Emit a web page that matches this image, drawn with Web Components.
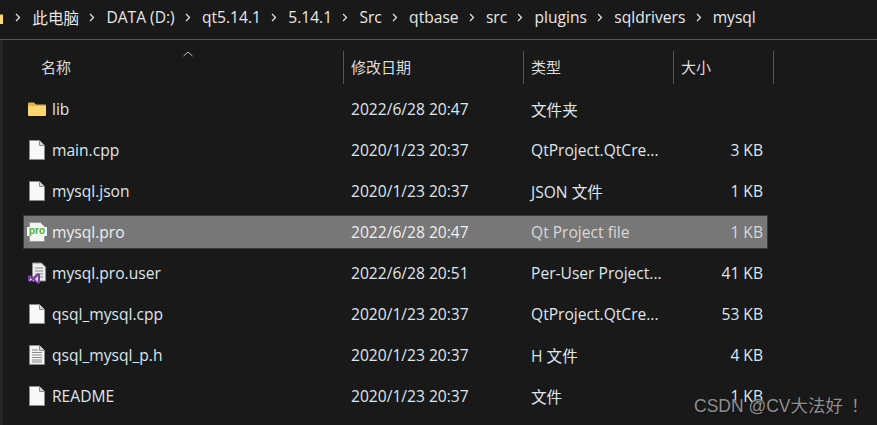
<!DOCTYPE html>
<html lang="zh">
<head>
<meta charset="utf-8">
<title>mysql</title>
<style>
  html, body { margin: 0; height: 100%; }
  body {
    background: #191919;
    color: #e6e6e6;
    font: 15.6px "Open Sans", "Noto Sans CJK SC", sans-serif;
    overflow: hidden;
  }
  explorer-window { height: 425px; }
  water-mark span { margin-left: 8px; }
</style>
</head>
<body>
<explorer-window>
  <path-bar>
    <path-crumb>此电脑</path-crumb>
    <path-crumb>DATA (D:)</path-crumb>
    <path-crumb>qt5.14.1</path-crumb>
    <path-crumb>5.14.1</path-crumb>
    <path-crumb>Src</path-crumb>
    <path-crumb>qtbase</path-crumb>
    <path-crumb>src</path-crumb>
    <path-crumb>plugins</path-crumb>
    <path-crumb>sqldrivers</path-crumb>
    <path-crumb>mysql</path-crumb>
  </path-bar>
  <list-head></list-head>
  <file-row icon="folder" name="lib" date="2022/6/28 20:47" kind="文件夹"></file-row>
  <file-row icon="file" name="main.cpp" date="2020/1/23 20:37" kind="QtProject.QtCre..." size="3 KB"></file-row>
  <file-row icon="file" name="mysql.json" date="2020/1/23 20:37" kind="JSON 文件" size="1 KB"></file-row>
  <file-row icon="pro" name="mysql.pro" date="2022/6/28 20:47" kind="Qt Project file" size="1 KB" selected></file-row>
  <file-row icon="vs" name="mysql.pro.user" date="2022/6/28 20:51" kind="Per-User Project..." size="41 KB"></file-row>
  <file-row icon="file" name="qsql_mysql.cpp" date="2020/1/23 20:37" kind="QtProject.QtCre..." size="53 KB"></file-row>
  <file-row icon="text" name="qsql_mysql_p.h" date="2020/1/23 20:37" kind="H 文件" size="4 KB"></file-row>
  <file-row icon="file" name="README" date="2020/1/23 20:37" kind="文件" size="1 KB"></file-row>
  <water-mark>CSDN @CV大法好<span>！</span></water-mark>
</explorer-window>

<script>
const sheet = `
  p { margin: 0; }
  svg { display: block; }
`;

class ExplorerWindow extends HTMLElement {
  constructor() {
    super();
    this.attachShadow({ mode: "open" });
    this.shadowRoot.innerHTML = `
      <style>
        :host { display: flex; flex-direction: column; position: relative; overflow: hidden; }
        .rows { display: flex; flex-direction: column; border-left: 3px solid #262626; flex: 1; }
      </style>
      <slot name="top"></slot>
      <div class="rows"><slot></slot></div>`;
  }
  connectedCallback() {
    this.querySelector("path-bar").slot = "top";
  }
}

class PathBar extends HTMLElement {
  constructor() {
    super();
    this.attachShadow({ mode: "open" });
    this.shadowRoot.innerHTML = `
      <style>
        :host {
          display: flex; align-items: center; height: 40px; box-sizing: border-box;
          border-bottom: 1px solid #555; padding-bottom: 5px; overflow: hidden;
        }
        svg { display: block; flex: none; margin-left: -9px; }
      </style>
      <svg width="14" height="16" viewBox="0 0 14 16">
        <path d="M0 4h3l2 1.500h7V15H0z" fill="#f4c84f"/>
        <path d="M0 6.500h12V15H0z" fill="#fddc75"/>
      </svg>
      <slot></slot>`;
  }
}

class PathCrumb extends HTMLElement {
  constructor() {
    super();
    this.attachShadow({ mode: "open" });
    this.shadowRoot.innerHTML = `
      <style>
        :host { display: flex; align-items: center; white-space: nowrap; color: #e8e8e8; }
        svg { display: block; flex: none; margin: 0 11px 0 10.300px; }
      </style>
      <svg width="6" height="9" viewBox="0 0 6 9">
        <path d="M1 1l3.500 3.500L1 8" fill="none" stroke="#e0e0e0" stroke-width="1.300"/>
      </svg>
      <slot></slot>`;
  }
}

class ListHead extends HTMLElement {
  constructor() {
    super();
    this.attachShadow({ mode: "open" });
    this.shadowRoot.innerHTML = `
      <style>
        :host {
          display: grid; grid-template-columns: 341px 180px 150px 100px;
          height: 33px; margin-top: 11px; margin-bottom: 8px;
          font-size: 15px; color: #dcdcdc; position: relative; line-height: 33px;
        }
        div { box-sizing: border-box; border-right: 1px solid #555; padding-left: 7px; }
        div.first { padding-left: 38px; }
        svg { position: absolute; left: 180px; top: 0; }
      </style>
      <div class="first">名称</div><div>修改日期</div><div>类型</div><div>大小</div>
      <svg width="10" height="6" viewBox="0 0 10 6">
        <path d="M.5 5L5 1l4.500 4" fill="none" stroke="#bdbdbd"/>
      </svg>`;
  }
}

const icons = {
  folder: `<svg width="18" height="16" viewBox="0 0 18 16">
      <path d="M0 2.500A1 1 0 0 1 1 1.500h5l2 2h9a1 1 0 0 1 1 1V6H0z" fill="#e9b23c"/>
      <path d="M0 5h18v9a1 1 0 0 1-1 1H1a1 1 0 0 1-1-1z" fill="#fcd672"/>
    </svg>`,
  file: `<svg width="16" height="20" viewBox="0 0 16 20">
      <path d="M.5.500h10l5 5v14H.5z" fill="#f8f8f8" stroke="#8c8c8c"/>
      <path d="M10.500.500v5h5" fill="#d5d5d5" stroke="#8c8c8c"/>
    </svg>`,
  text: `<svg width="16" height="20" viewBox="0 0 16 20">
      <path d="M.5.500h10l5 5v14H.5z" fill="#f2f2f2" stroke="#8c8c8c"/>
      <path d="M10.500.500v5h5" fill="#d5d5d5" stroke="#8c8c8c"/>
      <path d="M3 5h6M3 7.500h10M3 10h10M3 12.500h10M3 15h10M3 17h10" stroke="#8a8a8a"/>
    </svg>`,
  pro: `<svg width="20" height="20" viewBox="0 0 20 20">
      <path d="M2.500.500h11l4 4v15h-15z" fill="#f4f4f4" stroke="#9a9a9a"/>
      <path d="M0 5h20v9H0z" fill="#f4f4f4"/>
      <text x="10" y="12" text-anchor="middle" font-family="Liberation Sans" font-weight="700" font-size="10" fill="#4fb32a">pro</text>
    </svg>`,
  vs: `<svg width="20" height="22" viewBox="0 0 20 22">
      <path d="M5.500 1h9l4 4v14h-13z" fill="#ececec" stroke="#8c8c8c"/>
      <path d="M8 6h8M8 9h8M8 12h8M8 15h8" stroke="#8a8a8a"/>
      <path d="M1 14l2-1 3 2 5-4 2 1v9l-2 1-5-4-3 2-2-1z" fill="#7d3fa8"/>
      <path d="M3 16v3l2-1.500zM11 14l-3 3 3 3z" fill="#e6dcee"/>
    </svg>`,
};

class FileRow extends HTMLElement {
  constructor() {
    super();
    this.attachShadow({ mode: "open" });
  }
  connectedCallback() {
    const get = (n) => this.getAttribute(n) || "";
    this.shadowRoot.innerHTML = `
      <style>
        ${sheet}
        :host {
          display: grid; grid-template-columns: 25px 303px 180px 150px 87px;
          align-items: center; box-sizing: border-box; height: 34px; margin: 0 0 7px 20px;
          width: 745px; color: #dfe6ec; white-space: nowrap;
        }
        :host([selected]) {
          background: #777; outline: 1px solid #3a3a3a; outline-offset: -1px; color: #eee;
        }
        :host([selected]) .kind, :host([selected]) .size { color: #d8d8d8; }
        .icon { display: flex; justify-content: center; padding-left: 2px; }
        .name { padding-left: 4px; }
        .size { text-align: right; padding-right: 5px; }
      </style>
      <div class="icon">${icons[get("icon")]}</div>
      <p class="name">${get("name")}</p>
      <p class="date">${get("date")}</p>
      <p class="kind">${get("kind")}</p>
      <p class="size">${get("size")}</p>`;
  }
}

class WaterMark extends HTMLElement {
  constructor() {
    super();
    this.attachShadow({ mode: "open" });
    this.shadowRoot.innerHTML = `
      <style>
        :host {
          position: absolute; left: 694px; top: 392px; white-space: nowrap;
          font: 17.500px "Liberation Sans", "Noto Sans CJK SC", sans-serif; color: #8f8f8f;
          text-shadow: 1px 1px 1px #111;
        }
      </style>
      <slot></slot>`;
  }
}

customElements.define("explorer-window", ExplorerWindow);
customElements.define("path-bar", PathBar);
customElements.define("path-crumb", PathCrumb);
customElements.define("list-head", ListHead);
customElements.define("file-row", FileRow);
customElements.define("water-mark", WaterMark);
</script>
</body>
</html>
